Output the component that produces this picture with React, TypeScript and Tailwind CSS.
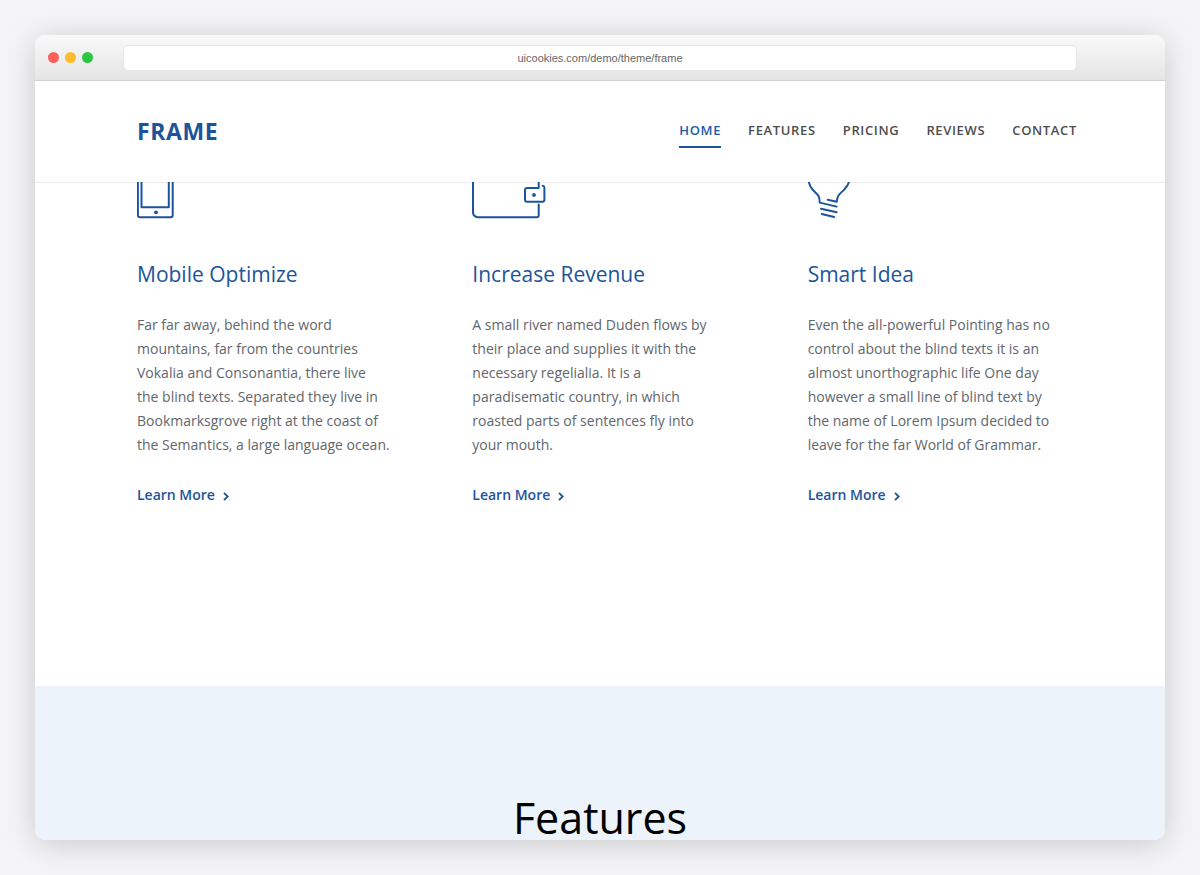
import React from "react";

const navLinks = [
  { label: "Home", href: "#home", active: true },
  { label: "Features", href: "#features", active: false },
  { label: "Pricing", href: "#pricing", active: false },
  { label: "Reviews", href: "#reviews", active: false },
  { label: "Contact", href: "#contact", active: false },
];

const iconProps = {
  height: 37,
  fill: "none",
  stroke: "currentColor",
  strokeWidth: 2,
  strokeLinecap: "round" as const,
  strokeLinejoin: "round" as const,
  "aria-hidden": true,
};

const PhoneIcon = () => (
  <svg {...iconProps} width={37} viewBox="0 0 37 37" strokeLinecap="butt">
    <path d="M.9 0v33.200a2 2 0 0 0 2 2h30.800a2 2 0 0 0 2-2V0" />
    <path d="M4.500 0v25.300h27.300V0" />
    <circle cx="19" cy="30.300" r="1.900" fill="currentColor" stroke="none" />
  </svg>
);

const WalletIcon = () => (
  <svg {...iconProps} width={75} viewBox="0 0 75 37">
    <path d="M1-2v32.500a4.700 4.700 0 0 0 4.700 4.700h59a2 2 0 0 0 2-2V22.500" />
    <path d="M66.700-2v7.900H55a2 2 0 0 0-2 2v9.800a2 2 0 0 0 2 2h15.400a2 2 0 0 0 2-2V5.800a2 2 0 0 0-1.700-2" />
    <circle cx="62" cy="13" r="1.900" fill="currentColor" stroke="none" />
  </svg>
);

const BulbIcon = () => (
  <svg {...iconProps} width={43} viewBox="1 0 43 37">
    <path d="M1.600-1C2.400 3 3.500 5.300 5.500 7.500c2 2.300 4.500 4 6 6.500 1 1.800 1.200 4 1.300 6.600l16.900 4" />
    <path d="M42.200-1C41.400 3 39.500 5.200 37.500 7.300c-2 2.200-4.300 3.700-6 6.200-1.200 1.800-1.500 3.800-1.800 6.200l-9-2" />
    <path d="M14 26.700l15.700 3.500M14.700 32l12.500 3" />
  </svg>
);

const services = [
  {
    icon: <PhoneIcon />,
    title: "Mobile Optimize",
    text: "Far far away, behind the word mountains, far from the countries Vokalia and Consonantia, there live the blind texts. Separated they live in Bookmarksgrove right at the coast of the Semantics, a large language ocean.",
  },
  {
    icon: <WalletIcon />,
    title: "Increase Revenue",
    text: "A small river named Duden flows by their place and supplies it with the necessary regelialia. It is a paradisematic country, in which roasted parts of sentences fly into your mouth.",
  },
  {
    icon: <BulbIcon />,
    title: "Smart Idea",
    text: "Even the all-powerful Pointing has no control about the blind texts it is an almost unorthographic life One day however a small line of blind text by the name of Lorem Ipsum decided to leave for the far World of Grammar.",
  },
];

const BrowserBar = () => (
  <div className="flex h-[46px] shrink-0 items-center border-b border-[#cfcfcf] bg-linear-to-b from-[#f9f9f9] to-[#e5e5e5] pr-[88px] pl-[13px]">
    <div className="flex gap-1.5">
      <span className="size-[11px] rounded-full bg-[#fc605b]" />
      <span className="size-[11px] rounded-full bg-[#fdbc2e]" />
      <span className="size-[11px] rounded-full bg-[#2ac840]" />
    </div>
    <input
      type="text"
      readOnly
      aria-label="Address"
      defaultValue="uicookies.com/demo/theme/frame"
      className="ml-[30px] h-[26px] min-w-0 flex-1 rounded-[5px] border border-[#e6e6e6] bg-white text-center font-['Liberation_Sans',sans-serif] text-[11px] text-[#666] outline-none"
    />
  </div>
);

const Header = () => (
  <header className="flex h-[101px] shrink-0 items-center justify-between bg-white pr-[88px] pl-[102px] shadow-[0_1px_0_#ececec]">
    <a
      href="#home"
      className="text-[23px] font-bold tracking-wide text-[#1c549c]"
    >
      FRAME
    </a>
    <nav className="flex gap-[27px]">
      {navLinks.map((link) => (
        <a
          key={link.label}
          href={link.href}
          className={
            link.active
              ? "border-b-2 border-[#1c549c] pt-1 pb-1.5 text-[13px] leading-5 font-semibold tracking-wider text-[#1c5aaa] uppercase"
              : "border-b-2 border-transparent pt-1 pb-1.5 text-[13px] leading-5 font-semibold tracking-wider text-[#4d4d4d] uppercase"
          }
        >
          {link.label}
        </a>
      ))}
    </nav>
  </header>
);

const App = () => {
  return (
    <div className="h-screen bg-[#f5f5f7] p-[35px] font-['Open_Sans',sans-serif]">
      <div className="flex h-full flex-col overflow-hidden rounded-[10px] bg-white shadow-[0_4px_32px_rgba(0,0,0,0.18)]">
        <BrowserBar />
        <Header />
        <main className="min-h-0 flex-1 overflow-hidden">
          <section className="grid grid-cols-3 px-[62px] pb-[179px]">
            {services.map((s) => (
              <div key={s.title} className="pr-[42px] pl-10 text-[#1c549c]">
                {s.icon}
                <h2 className="mt-[39px] text-[21px] leading-8">{s.title}</h2>
                <p className="mt-[23px] text-sm leading-6 text-[#5f666d]">
                  {s.text}
                </p>
                <a
                  href="#features"
                  className="mt-[26px] flex items-center gap-2 text-sm leading-6 font-semibold"
                >
                  Learn More
                  <svg
                    width="6"
                    height="9"
                    viewBox="0 0 6 9"
                    fill="none"
                    stroke="currentColor"
                    strokeWidth="1.800"
                    className="mt-0.5"
                    aria-hidden="true"
                  >
                    <path d="M1 .8l3.700 3.700L1 8.200" />
                  </svg>
                </a>
              </div>
            ))}
          </section>
          <section id="features" className="bg-[#ecf3fb] pt-[100px] pb-24">
            <h2 className="text-center text-[43px] leading-[64px] text-black">
              Features
            </h2>
          </section>
        </main>
      </div>
    </div>
  );
};

export default App;
